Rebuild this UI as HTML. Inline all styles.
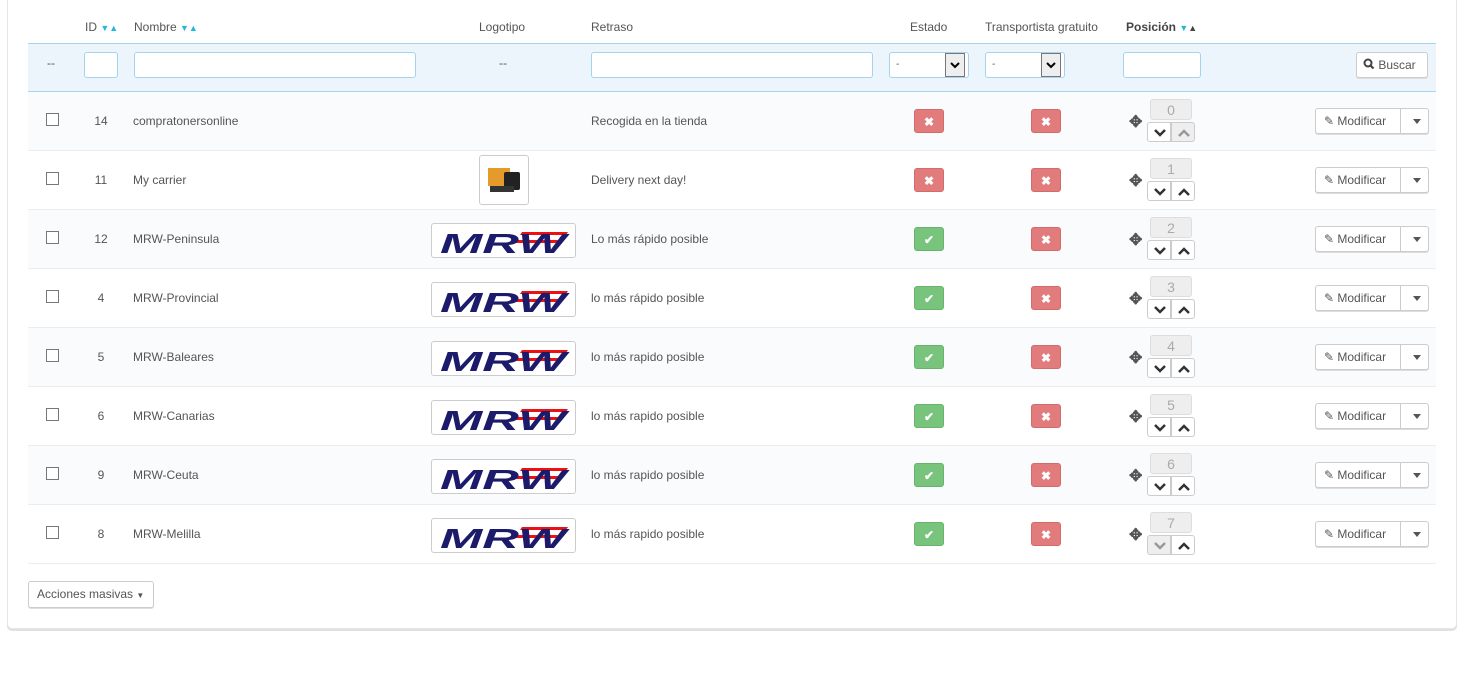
<!DOCTYPE html>
<html><head><meta charset="utf-8"><style>
*{box-sizing:border-box;margin:0;padding:0}
body{width:1467px;height:696px;background:#fff;font-family:"Liberation Sans",sans-serif;font-size:12px;color:#555;position:relative;overflow:hidden}
.card{position:absolute;left:7px;top:-5px;width:1450px;height:634px;border:1px solid #e6e6e6;border-radius:5px;box-shadow:0 2px 0 #e0e0e0;background:#fff}
.a{position:absolute}
.hd{position:absolute;top:20px;font-size:12px;color:#555}
.filter{position:absolute;left:28px;top:43px;width:1408px;height:49px;background:#ecf5fb;border-top:1px solid #a6d4ef;border-bottom:1px solid #a6d4ef}
.inp{position:absolute;height:26px;background:#fff;border:1px solid #a6d4ef;border-radius:3px}
.row{position:absolute;left:28px;width:1408px;height:59px;border-bottom:1px solid #e9edf0}
.row.l{background:#fafbfc}
.row span,.row div{position:absolute}
.cb{left:18px;top:21px;width:13px;height:13px;border:1px solid #777;background:#fff}
.id{left:56px;width:34px;text-align:center;top:22px}
.nm{left:105px;top:22px}
.rt{left:563px;top:22px}
.bd{top:17px;width:30px;height:24px;border-radius:3px;color:#fff;text-align:center;line-height:24px;font-weight:bold;font-size:12px}
.x{background:#e27c7c;border:1px solid #d56a6a}
.ok{background:#78c47c;border:1px solid #67b56b}
.mv{left:1101px;top:20px;font-size:16px;color:#555;font-weight:bold}
.pos{left:1122px;top:7px;width:42px;height:21px;background:#eee;border:1px solid #ddd;border-radius:3px;color:#aaa;text-align:center;font-size:14px;line-height:20px}
.pb{top:30px;width:24px;height:20px;border:1px solid #ccc;background:#fff}
.pb svg{position:absolute;left:6px;top:5px}
.mod{left:1287px;top:16px;width:114px;height:26px;border:1px solid #ccc;border-radius:3px;background:#fff;box-shadow:0 1px 0 #ddd}
.mod .t{left:0;top:0;width:85px;height:24px;border-right:1px solid #ccc;line-height:24px;padding-left:8px;font-size:12px;color:#555}
.mod .c{left:97px;top:10px;width:0;height:0;border-left:4px solid transparent;border-right:4px solid transparent;border-top:5px solid #555}
.mrw{left:403px;top:13px;width:145px;height:35px;border:1px solid #ccc;border-radius:3px;background:#fff;overflow:hidden}
</style></head><body>
<div class="card"></div>
<div class="hd" style="left:85px">ID <span style="color:#25b9d7;font-size:9px">▼▲</span></div>
<div class="hd" style="left:134px">Nombre <span style="color:#25b9d7;font-size:9px">▼▲</span></div>
<div class="hd" style="left:479px">Logotipo</div>
<div class="hd" style="left:591px">Retraso</div>
<div class="hd" style="left:910px">Estado</div>
<div class="hd" style="left:985px">Transportista gratuito</div>
<div class="hd" style="left:1126px;font-weight:bold;color:#444">Posición <span style="font-size:9px"><span style="color:#25b9d7">▼</span>▲</span></div>
<div class="filter"></div>
<div class="a" style="left:47px;top:56px">--</div>
<div class="inp" style="left:84px;top:52px;width:34px"></div>
<div class="inp" style="left:134px;top:52px;width:282px"></div>
<div class="a" style="left:499px;top:56px">--</div>
<div class="inp" style="left:591px;top:52px;width:282px"></div>
<div class="inp" style="left:889px;top:52px;width:80px"><span class="a" style="left:6px;top:6px;font-size:10px">-</span><span class="a" style="left:55px;top:0;width:20px;height:24px;border:1px solid #777;background:#eee"><svg width="18" height="22"><path d="M5 9l4 4 4-4" stroke="#000" stroke-width="2" fill="none"/></svg></span></div>
<div class="inp" style="left:985px;top:52px;width:80px"><span class="a" style="left:6px;top:6px;font-size:10px">-</span><span class="a" style="left:55px;top:0;width:20px;height:24px;border:1px solid #777;background:#eee"><svg width="18" height="22"><path d="M5 9l4 4 4-4" stroke="#000" stroke-width="2" fill="none"/></svg></span></div>
<div class="inp" style="left:1123px;top:52px;width:78px"></div>
<div class="a" style="left:1356px;top:52px;width:72px;height:26px;border:1px solid #ccc;border-radius:3px;background:#fff;box-shadow:0 1px 0 #ddd;line-height:24px;padding-left:6px;color:#555"><svg width="12" height="12" style="vertical-align:-1px"><circle cx="5" cy="5" r="3.5" stroke="#444" stroke-width="2" fill="none"/><path d="M7.5 7.5l3 3" stroke="#444" stroke-width="2.2"/></svg> Buscar</div>

<div class="row l" style="top:92px"><div class="cb"></div><span class="id">14</span><span class="nm">compratonersonline</span><span class="rt">Recogida en la tienda</span><div class="bd x" style="left:886px">✖</div><div class="bd x" style="left:1003px">✖</div><span class="mv">✥</span><div class="pos">0</div><div class="pb" style="left:1119px;border-radius:3px 0 0 3px"><svg width="12" height="10"><path d="M1 2l5 5 5-5" stroke="#333" stroke-width="2.5" fill="none"/></svg></div><div class="pb" style="left:1143px;background:#eee;border-radius:0 3px 3px 0"><svg width="12" height="10"><path d="M1 8l5-5 5 5" stroke="#999" stroke-width="2.5" fill="none"/></svg></div><div class="mod"><span class="t">✎ Modificar</span><span class="c"></span></div></div>

<div class="row" style="top:151px"><div class="cb"></div><span class="id">11</span><span class="nm">My carrier</span><div style="left:451px;top:4px;width:50px;height:50px;border:1px solid #ccc;border-radius:3px;background:#fff"><div style="left:8px;top:12px;width:22px;height:18px;background:#e59a2c"></div><div style="left:24px;top:16px;width:16px;height:18px;background:#222;border-radius:2px"></div><div style="left:10px;top:30px;width:24px;height:6px;background:#333"></div></div><span class="rt">Delivery next day!</span><div class="bd x" style="left:886px">✖</div><div class="bd x" style="left:1003px">✖</div><span class="mv">✥</span><div class="pos">1</div><div class="pb" style="left:1119px;border-radius:3px 0 0 3px"><svg width="12" height="10"><path d="M1 2l5 5 5-5" stroke="#333" stroke-width="2.5" fill="none"/></svg></div><div class="pb" style="left:1143px;border-radius:0 3px 3px 0"><svg width="12" height="10"><path d="M1 8l5-5 5 5" stroke="#333" stroke-width="2.5" fill="none"/></svg></div><div class="mod"><span class="t">✎ Modificar</span><span class="c"></span></div></div>

<div class="row l" style="top:210px"><div class="cb"></div><span class="id">12</span><span class="nm">MRW-Peninsula</span><div class="mrw"><svg width="145" height="35"><path d="M90 8h46l-2 3h-46zM86 16h40l-2 3h-40z" fill="#e11"/><text x="8" y="29" font-family="Liberation Sans" font-weight="bold" font-style="italic" font-size="28" fill="#1c1a6a" textLength="126" lengthAdjust="spacingAndGlyphs">MRW</text></svg></div><span class="rt">Lo más rápido posible</span><div class="bd ok" style="left:886px">✔</div><div class="bd x" style="left:1003px">✖</div><span class="mv">✥</span><div class="pos">2</div><div class="pb" style="left:1119px;border-radius:3px 0 0 3px"><svg width="12" height="10"><path d="M1 2l5 5 5-5" stroke="#333" stroke-width="2.5" fill="none"/></svg></div><div class="pb" style="left:1143px;border-radius:0 3px 3px 0"><svg width="12" height="10"><path d="M1 8l5-5 5 5" stroke="#333" stroke-width="2.5" fill="none"/></svg></div><div class="mod"><span class="t">✎ Modificar</span><span class="c"></span></div></div>

<div class="row" style="top:269px"><div class="cb"></div><span class="id">4</span><span class="nm">MRW-Provincial</span><div class="mrw"><svg width="145" height="35"><path d="M90 8h46l-2 3h-46zM86 16h40l-2 3h-40z" fill="#e11"/><text x="8" y="29" font-family="Liberation Sans" font-weight="bold" font-style="italic" font-size="28" fill="#1c1a6a" textLength="126" lengthAdjust="spacingAndGlyphs">MRW</text></svg></div><span class="rt">lo más rápido posible</span><div class="bd ok" style="left:886px">✔</div><div class="bd x" style="left:1003px">✖</div><span class="mv">✥</span><div class="pos">3</div><div class="pb" style="left:1119px;border-radius:3px 0 0 3px"><svg width="12" height="10"><path d="M1 2l5 5 5-5" stroke="#333" stroke-width="2.5" fill="none"/></svg></div><div class="pb" style="left:1143px;border-radius:0 3px 3px 0"><svg width="12" height="10"><path d="M1 8l5-5 5 5" stroke="#333" stroke-width="2.5" fill="none"/></svg></div><div class="mod"><span class="t">✎ Modificar</span><span class="c"></span></div></div>

<div class="row l" style="top:328px"><div class="cb"></div><span class="id">5</span><span class="nm">MRW-Baleares</span><div class="mrw"><svg width="145" height="35"><path d="M90 8h46l-2 3h-46zM86 16h40l-2 3h-40z" fill="#e11"/><text x="8" y="29" font-family="Liberation Sans" font-weight="bold" font-style="italic" font-size="28" fill="#1c1a6a" textLength="126" lengthAdjust="spacingAndGlyphs">MRW</text></svg></div><span class="rt">lo más rapido posible</span><div class="bd ok" style="left:886px">✔</div><div class="bd x" style="left:1003px">✖</div><span class="mv">✥</span><div class="pos">4</div><div class="pb" style="left:1119px;border-radius:3px 0 0 3px"><svg width="12" height="10"><path d="M1 2l5 5 5-5" stroke="#333" stroke-width="2.5" fill="none"/></svg></div><div class="pb" style="left:1143px;border-radius:0 3px 3px 0"><svg width="12" height="10"><path d="M1 8l5-5 5 5" stroke="#333" stroke-width="2.5" fill="none"/></svg></div><div class="mod"><span class="t">✎ Modificar</span><span class="c"></span></div></div>

<div class="row" style="top:387px"><div class="cb"></div><span class="id">6</span><span class="nm">MRW-Canarias</span><div class="mrw"><svg width="145" height="35"><path d="M90 8h46l-2 3h-46zM86 16h40l-2 3h-40z" fill="#e11"/><text x="8" y="29" font-family="Liberation Sans" font-weight="bold" font-style="italic" font-size="28" fill="#1c1a6a" textLength="126" lengthAdjust="spacingAndGlyphs">MRW</text></svg></div><span class="rt">lo más rapido posible</span><div class="bd ok" style="left:886px">✔</div><div class="bd x" style="left:1003px">✖</div><span class="mv">✥</span><div class="pos">5</div><div class="pb" style="left:1119px;border-radius:3px 0 0 3px"><svg width="12" height="10"><path d="M1 2l5 5 5-5" stroke="#333" stroke-width="2.5" fill="none"/></svg></div><div class="pb" style="left:1143px;border-radius:0 3px 3px 0"><svg width="12" height="10"><path d="M1 8l5-5 5 5" stroke="#333" stroke-width="2.5" fill="none"/></svg></div><div class="mod"><span class="t">✎ Modificar</span><span class="c"></span></div></div>

<div class="row l" style="top:446px"><div class="cb"></div><span class="id">9</span><span class="nm">MRW-Ceuta</span><div class="mrw"><svg width="145" height="35"><path d="M90 8h46l-2 3h-46zM86 16h40l-2 3h-40z" fill="#e11"/><text x="8" y="29" font-family="Liberation Sans" font-weight="bold" font-style="italic" font-size="28" fill="#1c1a6a" textLength="126" lengthAdjust="spacingAndGlyphs">MRW</text></svg></div><span class="rt">lo más rapido posible</span><div class="bd ok" style="left:886px">✔</div><div class="bd x" style="left:1003px">✖</div><span class="mv">✥</span><div class="pos">6</div><div class="pb" style="left:1119px;border-radius:3px 0 0 3px"><svg width="12" height="10"><path d="M1 2l5 5 5-5" stroke="#333" stroke-width="2.5" fill="none"/></svg></div><div class="pb" style="left:1143px;border-radius:0 3px 3px 0"><svg width="12" height="10"><path d="M1 8l5-5 5 5" stroke="#333" stroke-width="2.5" fill="none"/></svg></div><div class="mod"><span class="t">✎ Modificar</span><span class="c"></span></div></div>

<div class="row" style="top:505px"><div class="cb"></div><span class="id">8</span><span class="nm">MRW-Melilla</span><div class="mrw"><svg width="145" height="35"><path d="M90 8h46l-2 3h-46zM86 16h40l-2 3h-40z" fill="#e11"/><text x="8" y="29" font-family="Liberation Sans" font-weight="bold" font-style="italic" font-size="28" fill="#1c1a6a" textLength="126" lengthAdjust="spacingAndGlyphs">MRW</text></svg></div><span class="rt">lo más rapido posible</span><div class="bd ok" style="left:886px">✔</div><div class="bd x" style="left:1003px">✖</div><span class="mv">✥</span><div class="pos">7</div><div class="pb" style="left:1119px;background:#eee;border-radius:3px 0 0 3px"><svg width="12" height="10"><path d="M1 2l5 5 5-5" stroke="#999" stroke-width="2.5" fill="none"/></svg></div><div class="pb" style="left:1143px;border-radius:0 3px 3px 0"><svg width="12" height="10"><path d="M1 8l5-5 5 5" stroke="#333" stroke-width="2.5" fill="none"/></svg></div><div class="mod"><span class="t">✎ Modificar</span><span class="c"></span></div></div>

<div class="a" style="left:28px;top:581px;width:126px;height:27px;border:1px solid #ccc;border-radius:3px;background:#fff;box-shadow:0 1px 0 #ddd;line-height:25px;padding-left:8px">Acciones masivas <span style="font-size:8px">▼</span></div>
</body></html>
